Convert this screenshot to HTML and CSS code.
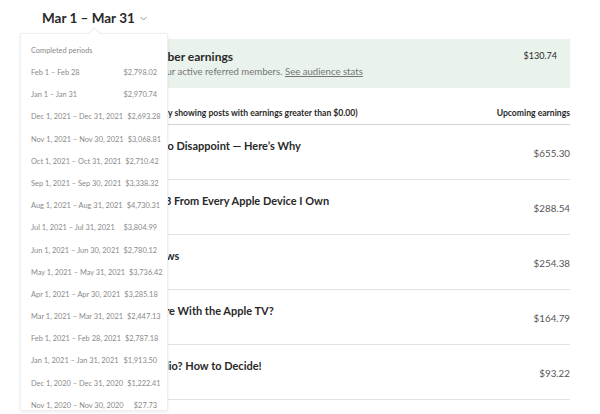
FILE: index.html
```html
<!DOCTYPE html>
<html>
<head>
<meta charset="utf-8">
<link rel="stylesheet" href="styles.css">
</head>
<body>
<div class="page">
  <header class="period">
    <h1 class="period-title">Mar 1 – Mar 31</h1>
    <svg class="chev" width="7" height="5" viewBox="0 0 7 5"><path d="M0.5 1 L3.5 4 L6.5 1" fill="none" stroke="#8a8a8a" stroke-width="0.9"/></svg>
  </header>

  <main class="content">
    <section class="referral">
      <div class="referral-text">
        <h2 class="referral-title">Monthly Referred member earnings</h2>
        <p class="referral-sub">Earnings for this period by your active referred members. <a class="link">See audience stats</a></p>
      </div>
      <div class="referral-amount">$130.74</div>
    </section>

    <div class="table-head">
      <span class="th-left">All stories published this period (Only showing posts with earnings greater than $0.00)</span>
      <span class="th-right">Upcoming earnings</span>
    </div>

    <div class="row"><span class="post">The iPhone 13 Mini Is Sure to Disappoint — Here’s Why</span><span class="amt">$655.30</span></div>
    <div class="row"><span class="post">My Favorite Mac Apps: Top 3 From Every Apple Device I Own</span><span class="amt">$288.54</span></div>
    <div class="row"><span class="post">My Frank AirPods Pro Reviews</span><span class="amt">$254.38</span></div>
    <div class="row"><span class="post">Where Can Siri Go From Here With the Apple TV?</span><span class="amt">$164.79</span></div>
    <div class="row"><span class="post">New iMac Pro or a Mac Studio? How to Decide!</span><span class="amt">$93.22</span></div>
  </main>

  <div class="dropdown">
    <div class="dd-label">Completed periods</div>
    <ul class="dd-list">
      <li><span>Feb 1 – Feb 28</span><span>$2,798.02</span></li>
      <li><span>Jan 1 – Jan 31</span><span>$2,970.74</span></li>
      <li><span>Dec 1, 2021 – Dec 31, 2021</span><span>$2,693.28</span></li>
      <li><span>Nov 1, 2021 – Nov 30, 2021</span><span>$3,068.81</span></li>
      <li><span>Oct 1, 2021 – Oct 31, 2021</span><span>$2,710.42</span></li>
      <li><span>Sep 1, 2021 – Sep 30, 2021</span><span>$3,338.32</span></li>
      <li><span>Aug 1, 2021 – Aug 31, 2021</span><span>$4,730.31</span></li>
      <li><span>Jul 1, 2021 – Jul 31, 2021</span><span>$3,804.99</span></li>
      <li><span>Jun 1, 2021 – Jun 30, 2021</span><span>$2,780.12</span></li>
      <li><span>May 1, 2021 – May 31, 2021</span><span>$3,736.42</span></li>
      <li><span>Apr 1, 2021 – Apr 30, 2021</span><span>$3,285.18</span></li>
      <li><span>Mar 1, 2021 – Mar 31, 2021</span><span>$2,447.13</span></li>
      <li><span>Feb 1, 2021 – Feb 28, 2021</span><span>$2,787.18</span></li>
      <li><span>Jan 1, 2021 – Jan 31, 2021</span><span>$1,913.50</span></li>
      <li><span>Dec 1, 2020 – Dec 31, 2020</span><span>$1,222.41</span></li>
      <li><span>Nov 1, 2020 – Nov 30, 2020</span><span>$27.73</span></li>
    </ul>
  </div>
</div>
</body>
</html>
```

FILE: styles.css
```css
* { box-sizing: border-box; }
html, body { margin: 0; padding: 0; background: #fff; }
body { font-family: Lato, "Open Sans", sans-serif; color: #292929; width: 600px; height: 414px; overflow: hidden; }
.page { position: relative; width: 600px; height: 414px; }

.period { display: flex; align-items: center; padding: 4px 0 0 42px; height: 31px; }
.period-title { margin: 0; font-size: 13.5px; font-weight: 700; line-height: 20px; }
.chev { margin-left: 5px; margin-top: 2px; }

.content { margin: 8px 30px 0 30px; }

.referral { display: flex; justify-content: space-between; background: #e9f3ec; height: 49px; padding: 10px 13px 0 14px; }
.referral-text { white-space: nowrap; }
.referral-title { margin: 0; font-size: 12px; font-weight: 700; line-height: 15px; }
.referral-sub { margin: 2px 0 0; font-size: 9.6px; color: #757575; line-height: 12px; }
.link { color: #757575; text-decoration: underline; }
.referral-amount { font-size: 9px; line-height: 12px; padding-top: 1px; }

.table-head { display: flex; justify-content: space-between; align-items: center; height: 37px; padding-top: 14px; border-bottom: 1px solid #d5d5d5; font-size: 8.6px; font-weight: 700; white-space: nowrap; }

.row { display: flex; justify-content: space-between; height: 55px; border-bottom: 1px solid #e3e3e3; padding-top: 13px; white-space: nowrap; }
.post { font-size: 11px; font-weight: 700; line-height: 15px; }
.amt { font-size: 9.8px; color: #555; margin-top: 9px; line-height: 12px; }

.dropdown { position: absolute; left: 20px; top: 33px; width: 148px; height: 378px; background: #fff; border: 1px solid #efefef; box-shadow: 0 1px 3px rgba(0,0,0,0.08); padding: 11px 10px 0 10px; }
.dropdown::before { content: ""; position: absolute; left: 69px; top: -5px; width: 8px; height: 8px; background: #fff; border-left: 1px solid #ececec; border-top: 1px solid #ececec; transform: rotate(45deg); }
.dd-label { font-size: 7.4px; color: #8a8a8a; line-height: 12px; height: 22px; }
.dd-list { list-style: none; margin: 0; padding: 0; }
.dd-list li { display: flex; justify-content: space-between; gap: 4px; white-space: nowrap; font-size: 7.4px; color: #8a8a8a; height: 22.2px; line-height: 12px; }
```
